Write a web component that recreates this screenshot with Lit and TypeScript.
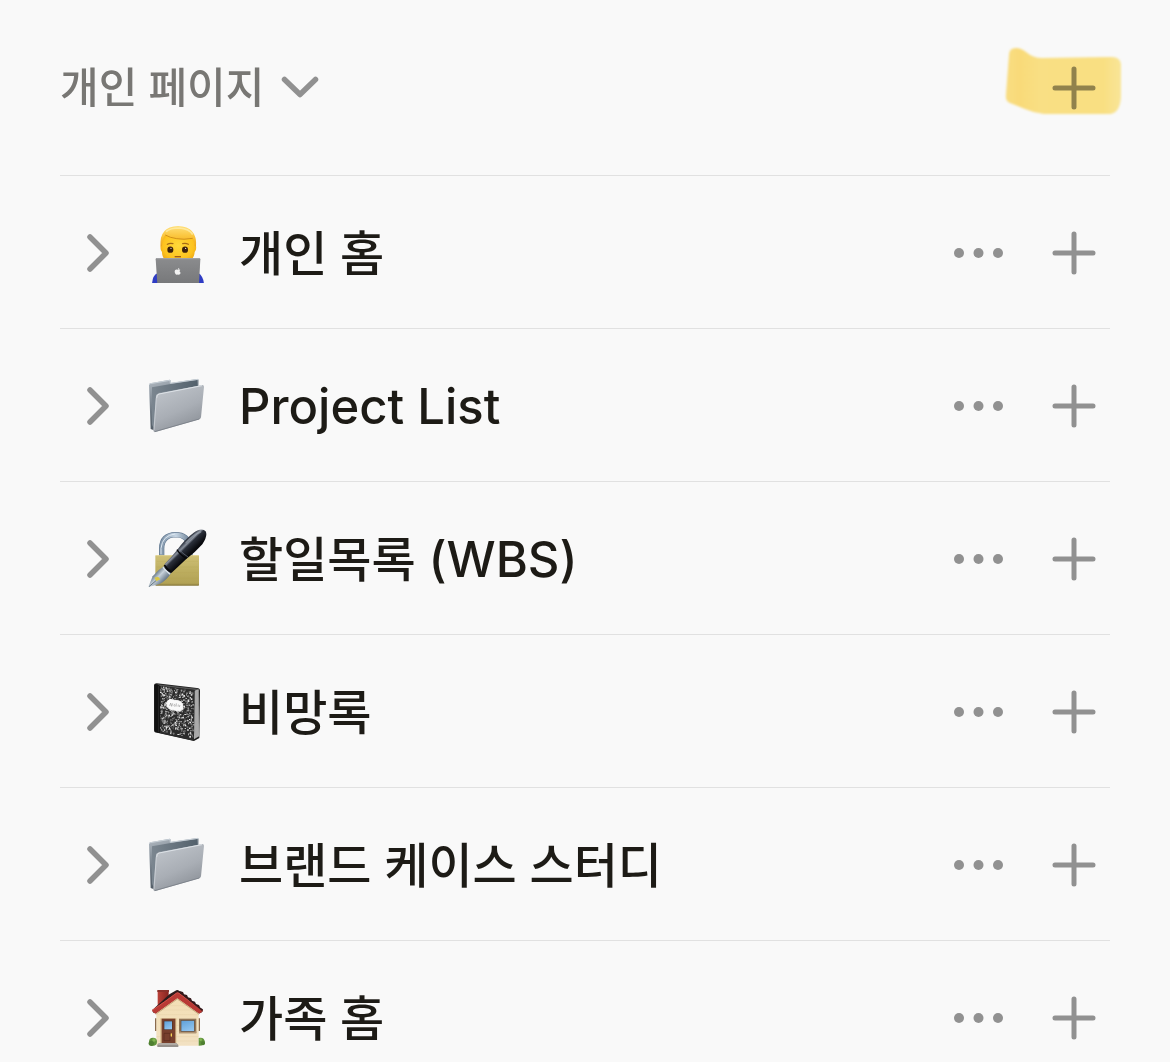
import { LitElement, html, css, svg, TemplateResult } from "lit";
import { customElement, property } from "lit/decorators.js";

type IconName = "person" | "folder" | "lockpen" | "notebook" | "house";

interface Page {
  title: string;
  icon: IconName;
}

const PAGES: Page[] = [
  { title: "개인 홈", icon: "person" },
  { title: "Project List", icon: "folder" },
  { title: "할일목록 (WBS)", icon: "lockpen" },
  { title: "비망록", icon: "notebook" },
  { title: "브랜드 케이스 스터디", icon: "folder" },
  { title: "가족 홈", icon: "house" },
];

const person = html`<svg viewBox="51 37 180 180" aria-hidden="true">
  <defs>
    <radialGradient id="face" cx="50%" cy="45%" r="60%">
      <stop offset="0" stop-color="#ffd93a" /><stop offset="0.7" stop-color="#fdc31f" /><stop offset="1" stop-color="#eaa114" />
    </radialGradient>
    <linearGradient id="hair" x1="0" y1="0" x2="0" y2="1">
      <stop offset="0" stop-color="#ffe07a" /><stop offset="0.5" stop-color="#fbc53c" /><stop offset="1" stop-color="#eba41c" />
    </linearGradient>
    <linearGradient id="laptop" x1="0" y1="0" x2="0" y2="1">
      <stop offset="0" stop-color="#8b8c8e" /><stop offset="1" stop-color="#77787a" />
    </linearGradient>
  </defs>
  <path d="M66 219 Q68 194 82 188 L206 188 Q219 196 222 219Z" fill="#2f3cc4" />
  <path d="M94 84 Q97 60 144 60 Q194 60 196 88 L198 106 Q200 118 194 124 Q192 158 144 160 Q96 158 96 124 Q90 118 92 106Z" fill="url(#face)" />
  <path d="M92 108 Q86 48 144 46 Q203 48 198 108 L194 106 Q195 92 188 83 Q160 88 140 84 Q119 81 106 73 Q96 84 96 106Z" fill="url(#hair)" />
  <path d="M106 73 Q119 81 140 84 Q160 88 188 83" fill="none" stroke="#c98514" stroke-width="2.5" />
  <path d="M108 63 Q120 52 148 52 Q178 54 188 72" fill="none" stroke="#fff0b0" stroke-width="5" opacity="0.7" />
  <path d="M112 101 Q120 96 129 99 M158 99 Q167 96 175 101" fill="none" stroke="#a66c15" stroke-width="3.5" stroke-linecap="round" />
  <ellipse cx="121" cy="117" rx="9" ry="9.5" fill="#3d220a" />
  <ellipse cx="165" cy="117" rx="9" ry="9.5" fill="#3d220a" />
  <circle cx="123" cy="113" r="1.8" fill="#fff" /><circle cx="167" cy="113" r="1.8" fill="#fff" />
  <path d="M134 138 H153" fill="none" stroke="#a35d15" stroke-width="4" />
  <path d="M80 142 H207 Q211 142 211 146 L207 219 H82 L77 146 Q77 142 80 142Z" fill="url(#laptop)" />
  <path d="M79 144 H209" stroke="#b3b4b6" stroke-width="2" />
  <path d="M143 178 C139 175 134 178 134 183 C134 188 138 193 141 192 Q143 191 146 192 C149 192 152 188 152 186 C148 184 148 180 151 178 C149 176 146 176 143 178Z M143 177 Q143 172 148 172 Q148 176 143 177Z" fill="#f2f2f2" />
</svg>`;

const folder = html`<svg viewBox="51 33 180 180" aria-hidden="true">
  <defs>
    <linearGradient id="back" x1="0" y1="0" x2="0.3" y2="1">
      <stop offset="0" stop-color="#b4bcc4" /><stop offset="0.35" stop-color="#87919b" /><stop offset="1" stop-color="#4b555f" />
    </linearGradient>
    <linearGradient id="inner" x1="0" y1="0" x2="1" y2="0">
      <stop offset="0" stop-color="#7b8690" /><stop offset="1" stop-color="#53616c" />
    </linearGradient>
    <linearGradient id="front" x1="0.1" y1="0" x2="0.6" y2="1">
      <stop offset="0" stop-color="#c2c7cd" /><stop offset="0.6" stop-color="#a9aeb5" /><stop offset="1" stop-color="#8c9198" />
    </linearGradient>
  </defs>
  <path d="M57 60 Q57 56 61 55 L119 44 Q122 44 122 48 L122 54 L202 42 Q206 42 206 46 L204 110 L72 196 L62 192Z" fill="url(#back)" />
  <path d="M66 67 L122 57 L202 45 L203 63 L84 84 L73 190 Q66 185 66 178Z" fill="url(#inner)" />
  <path d="M58 60 Q58 57 61 56 L120 46 L121 55 L204 43" fill="none" stroke="#c9d1d8" stroke-width="3" />
  <path d="M84 86 Q79 87 78 92 L70 195 Q70 202 76 201 L208 163 Q212 162 213 157 L222 65 Q222 59 216 60Z" fill="url(#front)" />
  <path d="M80 99 Q80 89 87 87 L216 62" fill="none" stroke="#dde2e7" stroke-width="3" />
  <path d="M79 99 L72 195" stroke="#d4dae0" stroke-width="2" />
  <path d="M74 200 L208 162" stroke="#777d86" stroke-width="2.5" />
</svg>`;

const lockpen = html`<svg viewBox="51 42 180 180" aria-hidden="true">
  <defs>
    <linearGradient id="brass" x1="0" y1="0" x2="0" y2="1">
      <stop offset="0" stop-color="#cfc077" /><stop offset="0.5" stop-color="#bdae60" /><stop offset="0.92" stop-color="#b2a255" /><stop offset="1" stop-color="#85763a" />
    </linearGradient>
    <linearGradient id="steel" x1="0" y1="0" x2="1" y2="0">
      <stop offset="0" stop-color="#8196ab" /><stop offset="0.5" stop-color="#c6d5e3" /><stop offset="1" stop-color="#6d8196" />
    </linearGradient>
    <linearGradient id="barrel" gradientUnits="userSpaceOnUse" x1="143" y1="84" x2="178" y2="120">
      <stop offset="0" stop-color="#1c2029" /><stop offset="0.25" stop-color="#383e4a" /><stop offset="0.42" stop-color="#8b929e" /><stop offset="0.55" stop-color="#2b303b" /><stop offset="1" stop-color="#08090d" />
    </linearGradient>
    <linearGradient id="nib" gradientUnits="userSpaceOnUse" x1="72" y1="174" x2="104" y2="204">
      <stop offset="0" stop-color="#566878" /><stop offset="0.4" stop-color="#c6d1da" /><stop offset="1" stop-color="#526476" />
    </linearGradient>
  </defs>
  <path d="M95 124 V100 Q96 60 137 59 Q173 59 180 94 V124" fill="none" stroke="#637991" stroke-width="16" />
  <path d="M95 124 V100 Q96 60 137 59 Q173 59 180 94 V124" fill="none" stroke="url(#steel)" stroke-width="12" />
  <path d="M93 118 V100 Q97 61 135 57" fill="none" stroke="#e0eaf3" stroke-width="3" />
  <rect x="76" y="121" width="131" height="91" rx="2" fill="url(#brass)" />
  <path d="M77 122 H206" stroke="#e7da95" stroke-width="2" />
  <path d="M80 139 H204 M80 156 H204 M80 173 H204 M80 190 H204" stroke="#ad9d4d" stroke-width="1" opacity="0.6" />
  <path d="M106 151 Q83 165 68 184 L55 216 L89 207 Q111 195 126 170Z" fill="url(#nib)" />
  <path d="M57 215 L87 189" stroke="#3a4b59" stroke-width="2" />
  <path d="M73 188 L84 185 L91 193 L79 199Z" fill="#d9c846" />
  <path d="M99 157 L120 178" stroke="#dfe7ee" stroke-width="4" />
  <path d="M104 147 Q124 126 142 104 Q163 74 191 53 Q216 36 227 49 Q234 63 217 88 Q196 112 168 133 L125 173 Q117 174 103 158Z" fill="url(#barrel)" />
  <path d="M141 104 Q149 118 169 131" fill="none" stroke="#07080b" stroke-width="4" />
  <path d="M145 99 Q154 114 174 126" fill="none" stroke="#737a88" stroke-width="2" />
  <path d="M168 83 Q190 58 212 51" fill="none" stroke="#9fa6b2" stroke-width="4" stroke-linecap="round" opacity="0.6" />
  <path d="M103 150 Q111 164 124 171" fill="none" stroke="#07080b" stroke-width="5" />
</svg>`;

/* Deterministic speckle for the marbled notebook cover. */
let seed = 7;
const next = () => (seed = (seed * 48271) % 2147483647) / 2147483647;
const speckles: TemplateResult[] = [];
for (let i = 0; i < 640; i++) {
  const u = next();
  const x = Math.round(90 + u * 99);
  const y = Math.round(49 + u * 12 + next() * (134 + u * 8));
  const w = 2 + Math.floor(next() * 4);
  const h = 2 + Math.floor(next() * 4);
  const tone = ["#c9c9c9", "#9c9c9c", "#e4e4e4", "#7a7a7a", "#2c2c2c"][i % 5];
  speckles.push(svg`<rect x=${x} y=${y} width=${w} height=${h} fill=${tone}></rect>`);
}

const notebook = html`<svg viewBox="51 36 180 180" aria-hidden="true">
  <path d="M72 45 Q73 40 80 40 L201 54 Q210 55 210 62 L208 204 L192 213 L75 187 Q72 186 72 181Z" fill="#1d1d1d" />
  <path d="M82 43 L202 56 L208 62 L193 60 L88 48Z" fill="#555" />
  <path d="M193 62 L206 58 L207 199 L192 208Z" fill="#b4b4b4" />
  <path d="M197 63 V204 M201 61 V202 M205 61 V200" stroke="#8d8d8d" stroke-width="1" />
  <path d="M88 48 L194 60 L192 212 L88 189Z" fill="#2c2c2c" />
  ${speckles}
  <path d="M75 43 L90 47 L90 189 L75 186Z" fill="#111" />
  <path d="M86 48 V187" stroke="#424242" stroke-width="1.5" />
  <path d="M112 93 Q117 92 119 88 L151 94 Q153 98 158 101 L158 118 Q153 119 151 124 L118 117 Q116 113 111 110Z" fill="#fafafa" stroke="#fafafa" stroke-width="3" stroke-linejoin="round" />
  <path d="M119 108 L122 99 L125 109 L128 100 M131 105 q3 -4 4 1 q-1 5 -4 1 M139 100 l-1 10 M143 106 q4 -3 4 1 l-3 3 M150 106 l-2 5" fill="none" stroke="#999" stroke-width="2" />
</svg>`;

const house = html`<svg viewBox="51 38 180 180" aria-hidden="true">
  <defs>
    <linearGradient id="wall" x1="0" y1="0" x2="0" y2="1">
      <stop offset="0" stop-color="#f3dfb4" /><stop offset="1" stop-color="#f2e1c2" />
    </linearGradient>
    <linearGradient id="glass" x1="0" y1="0" x2="0.5" y2="1">
      <stop offset="0" stop-color="#5d9fd8" /><stop offset="1" stop-color="#8fc3ee" />
    </linearGradient>
    <linearGradient id="brick" x1="0" y1="0" x2="1" y2="0">
      <stop offset="0" stop-color="#bb4138" /><stop offset="1" stop-color="#86241f" />
    </linearGradient>
  </defs>
  <path d="M75 129 h5 v38 h-5z M205 129 h5 v38 h-5z" fill="#8a6b4f" />
  <rect x="83" y="46" width="33" height="48" fill="url(#brick)" />
  <rect x="82" y="44" width="35" height="6" fill="#8b302a" />
  <path d="M79 105 L142 57 L206 105 V211 H79Z" fill="url(#wall)" />
  <path d="M108 91 H178 M91 104 H194 M80 118 H205 M80 184 H205 M80 197 H205 M138 131 H146 M138 150 H146 M138 168 H146" stroke="#e6d3a9" stroke-width="1.5" />
  <path d="M68 103 L118 57 L139 45 Q143 43 148 47 L218 103 Q221 108 213 112 L207 114 L142 66 L77 114 Q69 113 68 109Z" fill="#301b1c" />
  <path d="M66 104 Q105 78 138 53 Q142 50 147 53 L218 105 Q218 110 208 115 L142 69 L76 115 Q67 111 66 104Z" fill="#b93a35" />
  <path d="M67 105 Q105 79 139 54 Q143 51 147 54 L217 106" fill="none" stroke="#cf5149" stroke-width="3" />
  <path d="M149 47 l10 3 l3 7 l9 2 l3 7 l9 3 l3 7 l9 3 l3 7 l9 3 l4 8 l8 5 l-3 5 L147 51Z" fill="#35191b" />
  <path d="M77 117 L142 71 L207 117" fill="none" stroke="#a98958" stroke-width="3" opacity="0.6" />
  <rect x="91" y="129" width="48" height="77" fill="#d8bb8b" />
  <rect x="95" y="130" width="41" height="75" fill="#77402d" />
  <rect x="101" y="136" width="27" height="28" fill="#523024" />
  <rect x="103" y="138" width="23" height="24" fill="url(#glass)" />
  <path d="M102 174 h18 v22 h-18z" fill="none" stroke="#5b2b1e" stroke-width="2" />
  <path d="M124 176 v6" stroke="#f4d257" stroke-width="4" stroke-linecap="round" />
  <rect x="147" y="130" width="52" height="44" fill="#917557" />
  <rect x="147" y="168" width="52" height="5" fill="#b19370" />
  <rect x="153" y="135" width="40" height="33" fill="url(#glass)" stroke="#604936" stroke-width="2" />
  <circle cx="69" cy="199" r="12" fill="#5f923a" /><circle cx="64" cy="204" r="8" fill="#4e7f30" /><circle cx="72" cy="194" r="5" fill="#82b553" />
  <path d="M206 188 Q222 184 225 200 Q226 211 206 211Z" fill="#5f923a" /><circle cx="219" cy="204" r="6" fill="#4e7f30" /><circle cx="212" cy="193" r="4" fill="#82b553" />
  <path d="M87 203 H139 L145 209 V215 H82 V208Z" fill="#96918c" />
  <path d="M87 204 H139 L143 208 H84Z" fill="#b9b3ac" />
</svg>`;

const ICONS: Record<IconName, TemplateResult> = { person, folder, lockpen, notebook, house };

/* Latin runs are set slightly larger so they sit evenly beside Hangul. */
const titleRuns = (title: string) =>
  title
    .split(/([\x21-\x7e]+(?: [\x21-\x7e]+)*)/)
    .filter((run) => run !== "")
    .map((run) => (/[\x21-\x7e]/.test(run) ? html`<span class="latin">${run}</span>` : run));

const plus = html`<svg width="44" height="44" viewBox="0 0 44 44" aria-hidden="true">
  <path d="M22 3V41M3 22H41" fill="none" stroke="#919191" stroke-width="5" stroke-linecap="round" />
</svg>`;

const buttonReset = css`
  * {
    box-sizing: border-box;
  }
  button {
    display: flex;
    align-items: center;
    flex: none;
    margin: 0;
    padding: 0;
    border: 0;
    background: none;
    color: inherit;
    font: inherit;
    cursor: pointer;
  }
  svg {
    display: block;
  }
`;

@customElement("page-row")
export class PageRow extends LitElement {
  static styles = [
    buttonReset,
    css`
      :host {
        display: block;
      }
      .row {
        display: flex;
        align-items: center;
        height: 153px;
        padding: 2px 14px 0 26px;
        border-top: 1px solid #e1e1e1;
      }
      .emoji {
        flex: none;
        width: 60px;
        margin: 0 32px 0 37px;
      }
      .title {
        flex: 1;
        min-width: 0;
        padding-top: 2px;
        overflow: hidden;
        text-overflow: ellipsis;
        white-space: nowrap;
        color: #1d1b16;
        text-decoration: none;
        font-size: 48px;
        font-weight: 500;
        line-height: 72px;
      }
      .latin {
        font-size: 49px;
      }
      .actions {
        display: flex;
        align-items: center;
        gap: 47px;
      }
    `,
  ];

  @property({ attribute: false }) page!: Page;

  render() {
    const { title, icon } = this.page;
    return html`<div class="row">
      <button type="button" aria-label="${title} 펼치기" aria-expanded="false">
        <svg width="24" height="40" viewBox="0 0 24 40" aria-hidden="true">
          <path d="M4 4L20 20L4 36" fill="none" stroke="#919191" stroke-width="5.5" stroke-linecap="round" stroke-linejoin="round" />
        </svg>
      </button>
      <span class="emoji">${ICONS[icon]}</span>
      <a class="title" href="#">${titleRuns(title)}</a>
      <div class="actions">
        <button type="button" aria-label="${title} 더 보기">
          <svg width="52" height="44" viewBox="0 0 52 44" aria-hidden="true" fill="#919191">
            <circle cx="6" cy="22" r="5" /><circle cx="25.5" cy="22" r="5" /><circle cx="45" cy="22" r="5" />
          </svg>
        </button>
        <button type="button" aria-label="${title} 하위 페이지 추가">${plus}</button>
      </div>
    </div>`;
  }
}

@customElement("app-root")
export class AppRoot extends LitElement {
  static styles = [
    buttonReset,
    css`
      :host {
        display: block;
        height: 100vh;
        overflow: hidden;
        padding: 0 60px;
        box-sizing: border-box;
        background: #f9f9f9;
        font-family: Inter, "Noto Sans CJK KR", sans-serif;
      }
      .header {
        display: flex;
        align-items: center;
        justify-content: space-between;
        height: 175px;
        padding-right: 14px;
      }
      .heading {
        margin: 0;
        color: #787774;
        font-size: 42px;
        font-weight: 500;
        line-height: 63px;
      }
      .toggle {
        gap: 17px;
      }
      .add {
        position: relative;
      }
      .marker {
        position: absolute;
        right: -30px;
        top: -23px;
        mix-blend-mode: multiply;
        pointer-events: none;
      }
      .list {
        margin: 0;
        padding: 0;
        list-style: none;
      }
    `,
  ];

  render() {
    return html`
      <header class="header">
        <h1 class="heading">
          <button class="toggle" type="button" aria-expanded="true">
            개인 페이지
            <svg width="38" height="24" viewBox="0 0 38 24" aria-hidden="true">
              <path d="M3.5 3.5L19 18.5L34.5 3.5" fill="none" stroke="#919191" stroke-width="5.5" stroke-linecap="round" stroke-linejoin="round" />
            </svg>
          </button>
        </h1>
        <button class="add" type="button" aria-label="페이지 추가">
          ${plus}
          <svg class="marker" width="126" height="80" viewBox="0 0 126 80" aria-hidden="true">
            <defs>
              <linearGradient id="ink" x1="0" y1="0" x2="1" y2="0">
                <stop offset="0" stop-color="#ffe385" /><stop offset="0.12" stop-color="#ffe07c" /><stop offset="0.3" stop-color="#ffe587" /><stop offset="0.85" stop-color="#ffe585" /><stop offset="1" stop-color="#ffeb9c" />
              </linearGradient>
              <filter id="soft"><feGaussianBlur stdDeviation="1.2" /></filter>
            </defs>
            <path d="M9 12 Q9 5 16 5 Q21 5 26 9 Q33 15 42 15 L112 14 Q120 14 121 21 L121 54 Q120 70 110 71 L44 71 Q34 70 25 66 L10 60 Q5 58 6 51 Z" fill="url(#ink)" filter="url(#soft)" />
          </svg>
        </button>
      </header>
      <ul class="list">
        ${PAGES.map((page) => html`<li><page-row .page=${page}></page-row></li>`)}
      </ul>
    `;
  }
}
